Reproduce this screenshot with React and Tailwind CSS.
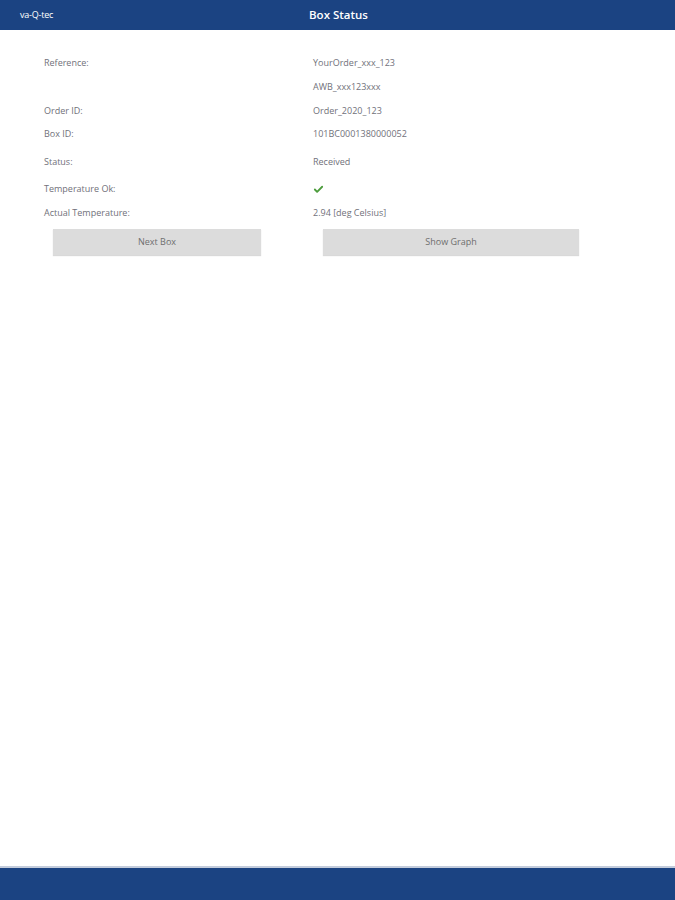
import { Check } from "lucide-react";

const rows = [
  { label: "Reference:", value: "YourOrder_xxx_123", h: "h-[24px]" },
  { label: "", value: "AWB_xxx123xxx", h: "h-[24px]" },
  { label: "Order ID:", value: "Order_2020_123", h: "h-[24px]" },
  { label: "Box ID:", value: "101BC0001380000052", h: "h-[22px]" },
  { label: "Status:", value: "Received", h: "h-[34px]" },
  { label: "Temperature Ok:", check: true, h: "h-[20px]" },
  { label: "Actual Temperature:", value: "2.94 [deg Celsius]", h: "h-[28px]" },
];

export default function App() {
  return (
    <div className="min-h-screen flex flex-col bg-white font-['Open_Sans',sans-serif]">
      <header className="h-[30px] bg-[#1b4382] flex items-center relative">
        <span className="pl-[20px] text-[9px] text-white tracking-tight">va-Q-tec</span>
        <span className="absolute left-1/2 -translate-x-1/2 ml-[1px] text-[11.5px] font-semibold text-white">Box Status</span>
      </header>

      <main className="flex-1 pt-[21px]">
        {rows.map((row, i) => (
          <div key={i} className={`${row.h} flex items-center text-[9px] text-[#71717a]`}>
            <div className="w-[313px] pl-[44px]">{row.label}</div>
            <div>
              {row.check ? (
                <Check size={11} strokeWidth={4} className="text-[#4c9c3c]" />
              ) : (
                row.value
              )}
            </div>
          </div>
        ))}

        <div className="flex">
          <div className="pl-[53px]">
            <button className="w-[208px] h-[26px] bg-[#dcdcdc] text-[9px] text-[#6e6e6e] shadow-[0_1px_1px_rgba(0,0,0,0.15)]">
              Next Box
            </button>
          </div>
          <div className="pl-[62px]">
            <button className="w-[256px] h-[26px] bg-[#dcdcdc] text-[9px] text-[#6e6e6e] shadow-[0_1px_1px_rgba(0,0,0,0.15)]">
              Show Graph
            </button>
          </div>
        </div>
      </main>

      <footer className="h-[34px] bg-[#1b4382] border-t-2 border-[#c3ccdc]"></footer>
    </div>
  );
}
